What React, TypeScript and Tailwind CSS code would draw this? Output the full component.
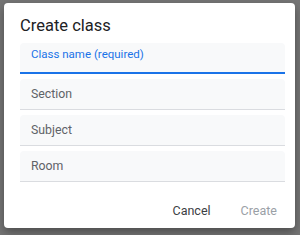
export default function App() {
  const fields = ['Section', 'Subject', 'Room'];

  return (
    <div
      className="w-[300px] h-[235px] bg-[#757575] pt-[3px] pl-[4px]"
      style={{ fontFamily: 'Roboto, "Noto Sans", sans-serif' }}
    >
      <div className="w-[291px] h-[225px] bg-white rounded-[4px] shadow-[0_4px_10px_rgba(0,0,0,0.35)] flex flex-col pl-4 pr-[10px]">
        <h1 className="text-[16.5px] leading-[22px] text-[#202124] pt-[12px]">Create class</h1>

        <div className="mt-[6px] flex flex-col gap-[5px]">
          <div className="h-[31px] bg-[#f8f9fa] rounded-t-[4px] border-b-2 border-[#1a73e8] flex items-start pt-[4px] px-[11px]">
            <span className="text-[11.5px] leading-[14px] text-[#1a73e8]">Class name (required)</span>
          </div>
          {fields.map((f) => (
            <div
              key={f}
              className="h-[31px] bg-[#f8f9fa] rounded-t-[4px] border-b border-[#dadce0] flex items-center px-[11px]"
            >
              <span className="text-[12.3px] leading-[16px] text-[#5f6368]">{f}</span>
            </div>
          ))}
        </div>

        <div className="mt-auto mb-[9px] flex justify-end gap-[30px] pr-[8px]">
          <button className="text-[12.5px] leading-[16px] text-[#3c4043]">Cancel</button>
          <button className="text-[12.5px] leading-[16px] text-[#9aa0a6]">Create</button>
        </div>
      </div>
    </div>
  );
}
